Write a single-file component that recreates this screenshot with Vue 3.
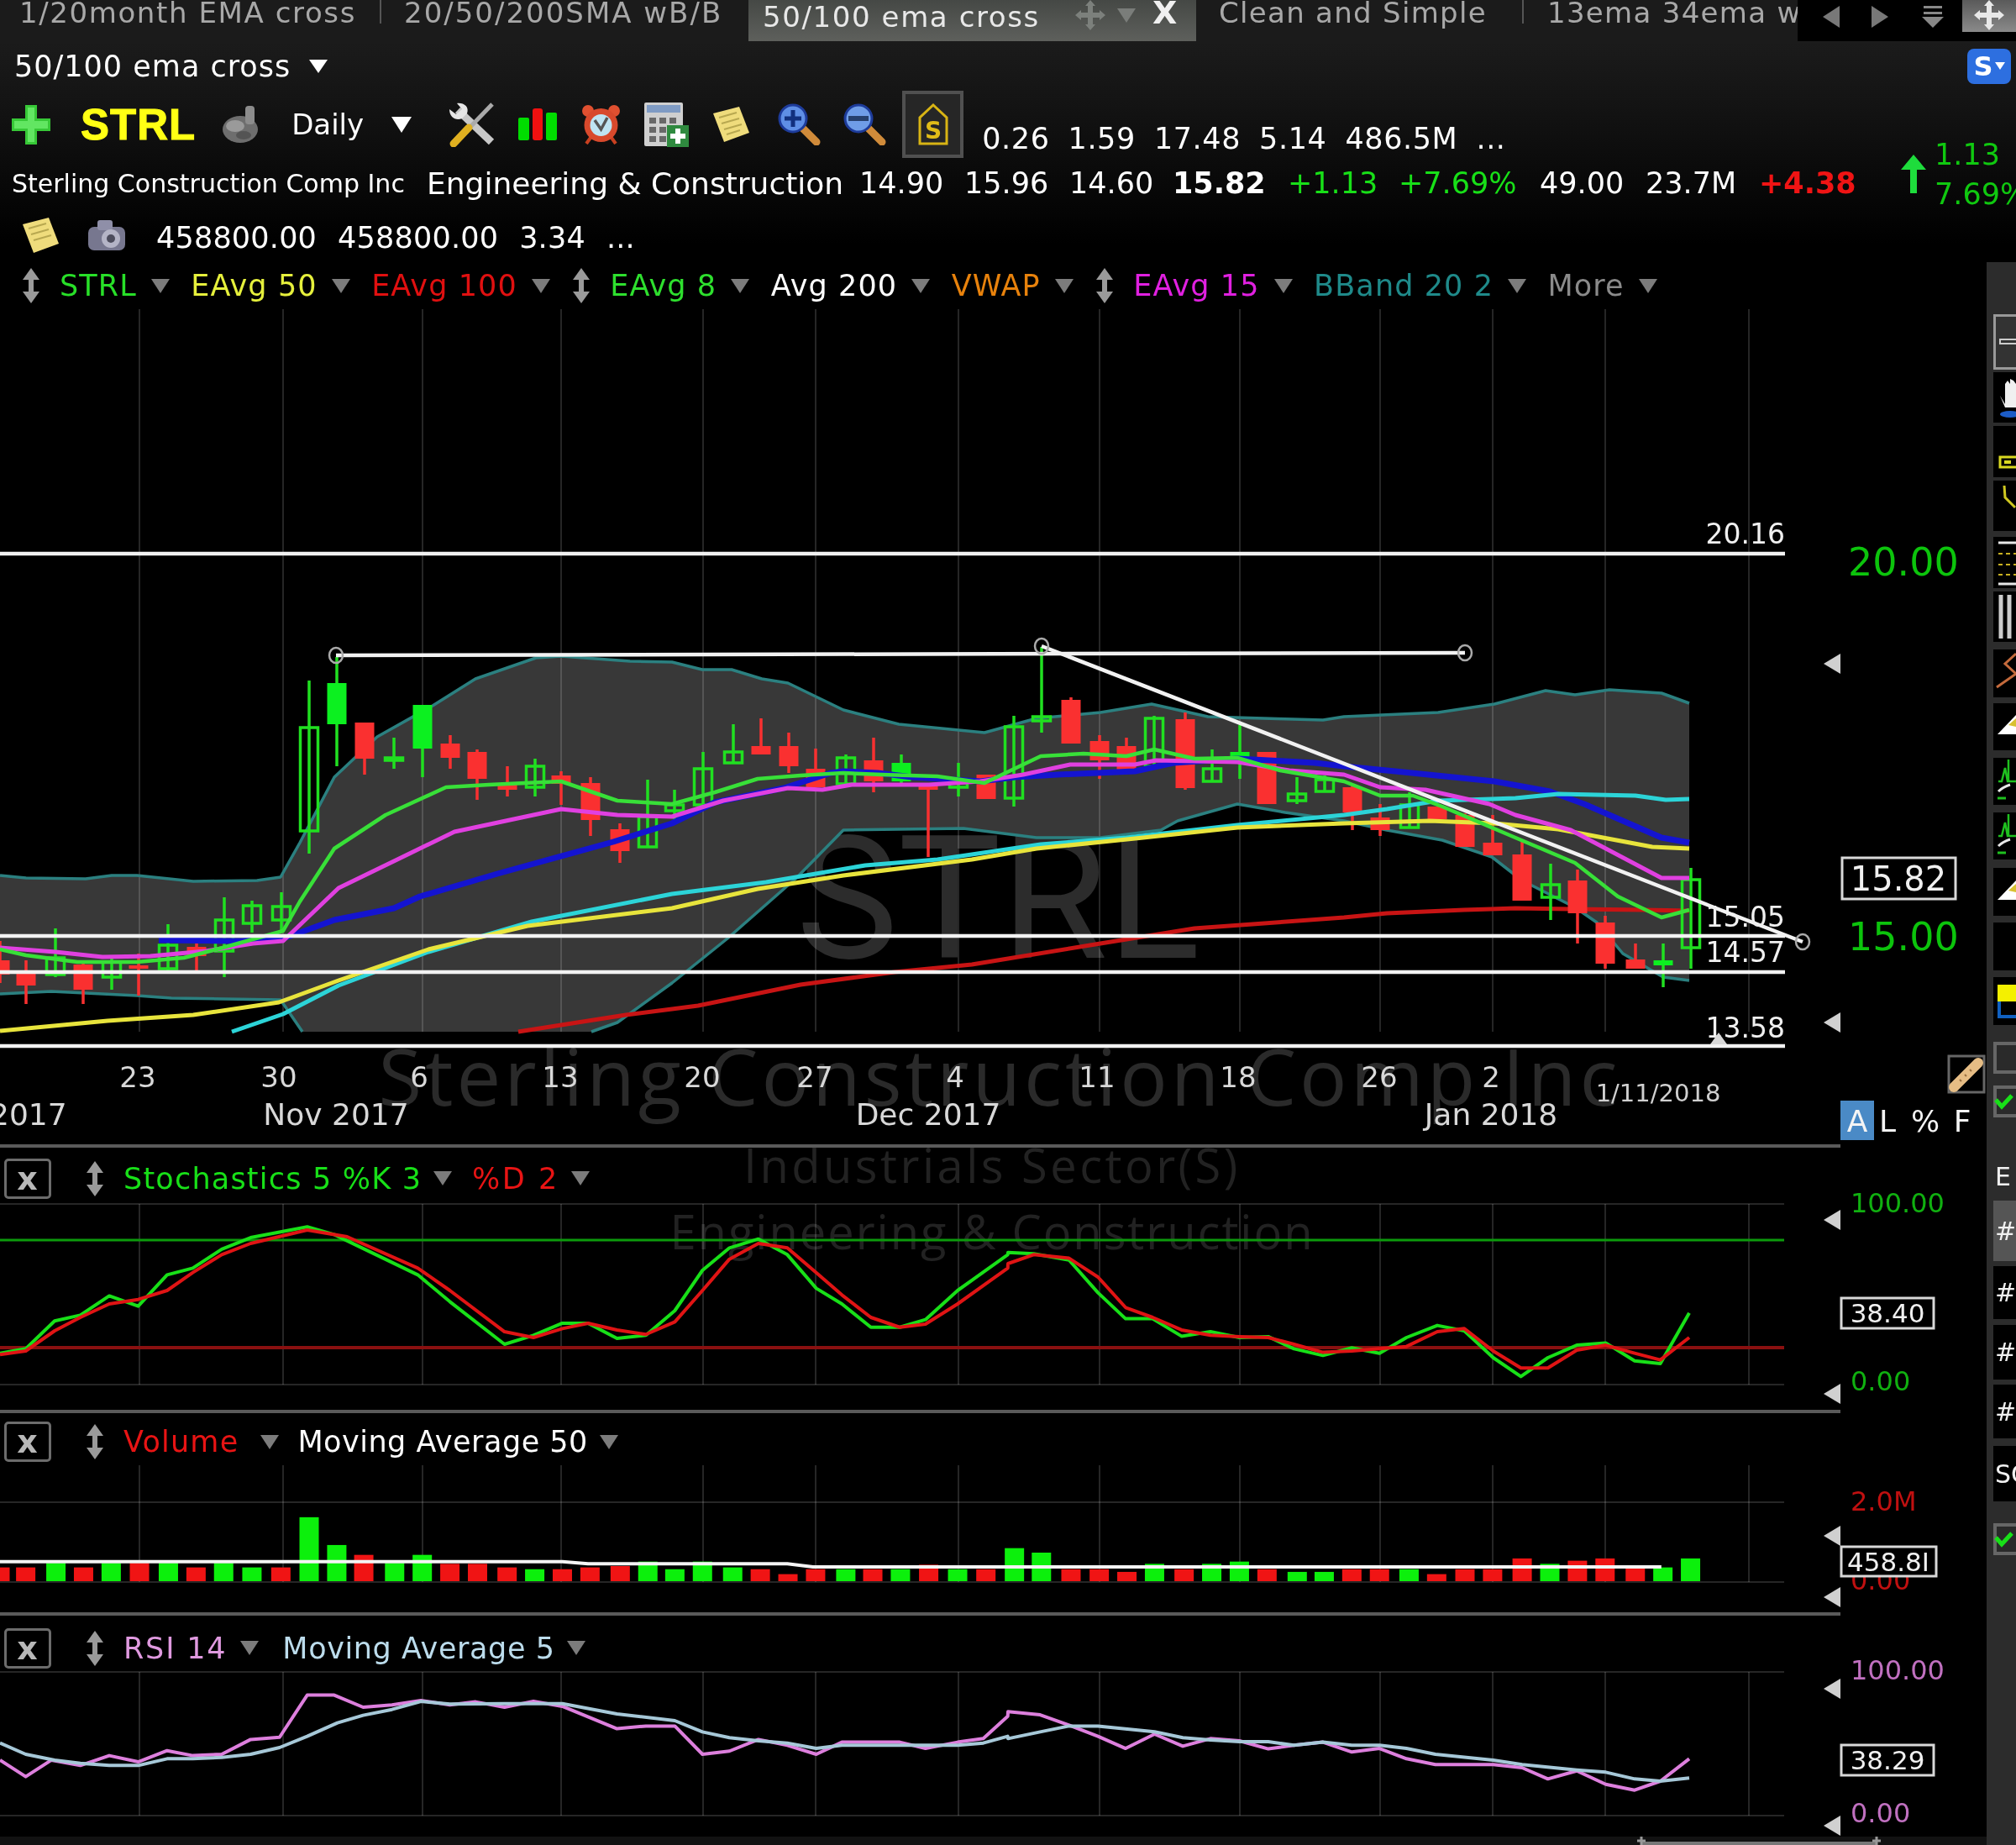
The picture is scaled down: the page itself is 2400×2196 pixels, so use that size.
<template>
  <div class="terminal">
    <div class="watermarks">
      <div class="wm wm-symbol">STRL</div>
      <div class="wm wm-name">Sterling Construction Comp Inc</div>
      <div class="wm wm-sector">Industrials Sector(S)</div>
      <div class="wm wm-industry">Engineering &amp; Construction</div>
    </div>

    <div class="content">
      <header class="head">
        <nav class="tabs">
          <span class="tab t1">1/20month EMA cross</span>
          <i class="tab-sep s1" />
          <span class="tab t2">20/50/200SMA wB/B</span>
          <span class="tab-active">
            <span class="tab-active-label">50/100 ema cross</span>
            <svg class="move" viewBox="0 0 40 36" width="40" height="36">
              <path d="M20 0l6 7h-3v8h8v-3l7 6-7 6v-3h-8v8h3l-6 7-6-7h3v-8H9v3l-7-6 7-6v3h8V7h-3z" fill="#7c807c" />
            </svg>
            <i class="caret caret-dim" />
            <b class="tab-close">X</b>
          </span>
          <span class="tab t3">Clean and Simple</span>
          <i class="tab-sep s2" />
          <span class="tab t4">13ema 34ema w</span>
          <div class="tab-controls">
            <svg viewBox="0 0 20 26" width="20" height="26"><path d="M20 0v26L0 13z" fill="#787878" /></svg>
            <svg class="next" viewBox="0 0 20 26" width="20" height="26"><path d="M0 0v26l20-13z" fill="#787878" /></svg>
            <svg class="stack" viewBox="0 0 26 26" width="26" height="26">
              <rect x="2" y="0" width="22" height="3" fill="#888" /><rect x="2" y="7" width="22" height="3" fill="#888" />
              <path d="M0 13h26L13 26z" fill="#888" />
            </svg>
            <span class="move-box">
              <svg viewBox="0 0 40 36" width="40" height="36">
                <path d="M20 0l6 7h-3v8h8v-3l7 6-7 6v-3h-8v8h3l-6 7-6-7h3v-8H9v3l-7-6 7-6v3h8V7h-3z" fill="#e8e8e8" />
              </svg>
            </span>
          </div>
        </nav>

        <div class="title-row">
          <span class="title">50/100 ema cross</span>
          <i class="caret caret-white" />
          <span class="badge"><b>S</b><i /></span>
        </div>

        <div class="tool-row">
          <svg class="ic-plus" viewBox="0 0 46 47" width="46" height="47">
            <path d="M16 0h14v16h16v15H30v16H16V31H0V16h16z" fill="#37c837" />
            <path d="M19 3h8v16h16v9H27v16h-8V28H3v-9h16z" fill="#62e662" />
          </svg>
          <span class="symbol">STRL</span>
          <svg class="ic-blob" viewBox="0 0 46 45" width="46" height="45">
            <ellipse cx="22" cy="28" rx="21" ry="16" fill="#6e6e6e" />
            <rect x="28" y="0" width="11" height="22" rx="4" fill="#8c8c8c" />
            <ellipse cx="16" cy="24" rx="11" ry="7" fill="#9a9a9a" />
            <ellipse cx="26" cy="35" rx="9" ry="5" fill="#545454" />
          </svg>
          <span class="interval">Daily</span>
          <i class="caret caret-white caret-big" />
          <div class="tools">
            <svg viewBox="0 0 57 53" width="57" height="53">
              <path d="M13 9l40 38" stroke="#c8c8c8" stroke-width="9" />
              <path d="M3 8c0 10 8 14 15 11l6-6C27 5 20 0 12 1l6 7-7 6z" fill="#e6e6e6" />
              <path d="M54 2L26 31" stroke="#aaa" stroke-width="5" />
              <path d="M26 30L8 49" stroke="#e0b020" stroke-width="9" stroke-linecap="round" />
            </svg>
            <svg viewBox="0 0 48 38" width="48" height="38">
              <rect x="1" y="11" width="13" height="27" rx="2" fill="#0d0" />
              <rect x="18" y="0" width="12" height="38" rx="3" fill="#f01010" />
              <rect x="34" y="5" width="13" height="33" rx="2" fill="#0d0" />
            </svg>
            <svg viewBox="0 0 49 48" width="49" height="48">
              <circle cx="9" cy="8" r="7" fill="#e05030" /><circle cx="40" cy="8" r="7" fill="#e05030" />
              <path d="M12 40l-5 7M37 40l5 7" stroke="#c84020" stroke-width="4" />
              <circle cx="24.500" cy="25" r="20" fill="#d8492c" />
              <circle cx="24.500" cy="25" r="13" fill="#bfe4f2" />
              <path d="M17 19l7.500 11L32 16" fill="none" stroke="#555" stroke-width="3.500" />
            </svg>
            <svg viewBox="0 0 53 53" width="53" height="53">
              <rect x="0" y="0" width="46" height="52" rx="2" fill="#cfcfcf" />
              <rect x="3" y="3" width="40" height="9" fill="#7f9bc4" />
              <path d="M6 18h8v7H6zM18 18h8v7h-8zM30 18h8v7h-8zM6 29h8v7H6zM18 29h8v7h-8zM6 40h8v7H6zM18 40h8v7h-8z" fill="#686868" />
              <rect x="27" y="27" width="26" height="26" fill="#2f8a3f" />
              <path d="M37 31h6v6h6v6h-6v6h-6v-6h-6v-6h6z" fill="#fff" />
            </svg>
            <svg class="ic-note" viewBox="0 0 46 44" width="46" height="44">
              <path d="M2 9L33 1l12 31-30 11z" fill="#efdc7c" />
              <path d="M9 14l21-6M12 21l21-6M15 28l21-6M18 34l16-5" stroke="#b8a850" stroke-width="2" />
            </svg>
            <svg viewBox="0 0 51 50" width="51" height="50">
              <path d="M30 30l16 16" stroke="#d08b3a" stroke-width="9" stroke-linecap="round" />
              <circle cx="18" cy="18" r="16" fill="#5f8fe6" stroke="#1d3b9a" stroke-width="3" />
              <path d="M8 18h20M18 8v20" stroke="#12307e" stroke-width="5" />
            </svg>
            <svg viewBox="0 0 51 50" width="51" height="50">
              <path d="M30 30l16 16" stroke="#d08b3a" stroke-width="9" stroke-linecap="round" />
              <circle cx="18" cy="18" r="16" fill="#6f9de8" stroke="#1d3b9a" stroke-width="3" />
              <path d="M6 18h24" stroke="#26406e" stroke-width="6" />
            </svg>
            <span class="shield-box">
              <svg viewBox="0 0 36 50" width="36" height="50">
                <path d="M18 2L34 17v31H2V17z" fill="none" stroke="#d8b414" stroke-width="3" />
                <text class="shield-s" x="18" y="42" text-anchor="middle">S</text>
              </svg>
            </span>
          </div>
          <div class="stats">
            <span>0.26</span><span>1.59</span><span>17.48</span><span>5.14</span><span>486.5M</span><span>...</span>
          </div>
        </div>

        <div class="quote-row">
          <span class="company">Sterling Construction Comp Inc</span>
          <span class="industry">Engineering &amp; Construction</span>
          <span class="q q1">14.90</span>
          <span class="q q2">15.96</span>
          <span class="q q3">14.60</span>
          <b class="q q4">15.82</b>
          <span class="q q5 up">+1.13</span>
          <span class="q q6 up">+7.69%</span>
          <span class="q q7">49.00</span>
          <span class="q q8">23.7M</span>
          <b class="q q9 down">+4.38</b>
          <svg class="up-arrow" viewBox="0 0 30 46" width="30" height="46">
            <path d="M15 0l15 18H19v28h-8V18H0z" fill="#1edc3c" />
          </svg>
          <div class="change"><span>1.13</span><span>7.69%</span></div>
        </div>

        <div class="extra-row">
          <svg viewBox="0 0 46 44" width="46" height="44">
            <path d="M2 9L33 1l12 31-30 11z" fill="#efdc7c" />
            <path d="M9 14l21-6M12 21l21-6M15 28l21-6" stroke="#b8a850" stroke-width="2" />
          </svg>
          <svg class="ic-camera" viewBox="0 0 46 40" width="46" height="40">
            <rect x="1" y="10" width="44" height="28" rx="7" fill="#77778f" />
            <rect x="12" y="2" width="18" height="12" rx="3" fill="#8f8fa8" />
            <circle cx="28" cy="24" r="11" fill="#b4b4c6" /><circle cx="28" cy="24" r="5" fill="#4c4c5c" />
          </svg>
          <div class="extra-values">
            <span>458800.00</span><span>458800.00</span><span>3.34</span><span>...</span>
          </div>
        </div>
      </header>

      <div class="workspace">
        <div class="charts">
          <div class="legend">
            <template v-for="item in legend" :key="item.label">
              <svg v-if="item.updown" class="updown" viewBox="0 0 24 42" width="24" height="42">
                <path d="M12 0l10 14h-7v14h7L12 42 2 28h7V14H2z" fill="#9a9a9a" />
              </svg>
              <span class="legend-label" :style="{ color: item.color }">{{ item.label }}</span>
              <i class="caret caret-grey" />
            </template>
          </div>

          <svg class="plot" viewBox="0 368 2365 994" width="2365" height="994">
            <path :d="bandArea" fill="#383838" />
            <line v-for="x in gridX" :key="x" :x1="x" :x2="x" y1="368" y2="1228" class="grid" />
            <polyline :points="pts(bbUpper)" class="ln" stroke="#2b8080" stroke-width="3.500" />
            <polyline :points="pts(bbLower)" class="ln" stroke="#2b8080" stroke-width="3.500" />
            <polyline :points="pts(bbLowerLeft)" class="ln" stroke="#2b8080" stroke-width="3.500" />
            <polyline :points="pts(emaRed)" class="ln" stroke="#c81414" stroke-width="5" />

            <g v-for="c in candles" :key="c[0]">
              <line :x1="c[0]" :x2="c[0]" :y1="c[1]" :y2="c[2]" stroke-width="3.500" :stroke="c[5] === 'r' ? '#f83030' : '#20e020'" />
              <rect
                v-if="c[5] === 'h'"
                :x="c[0] - 10.500" :y="c[3]" width="21" :height="c[4] - c[3]"
                fill="#000" fill-opacity="0.001" stroke="#20e020" stroke-width="3.500"
              />
              <rect
                v-else
                :x="c[0] - 11.500" :y="c[3]" width="23" :height="c[4] - c[3]"
                :fill="c[5] === 'r' ? '#fa3030' : '#0cf020'"
              />
            </g>

            <polyline :points="pts(emaBlue)" class="ln" stroke="#1414d0" stroke-width="7" />
            <polyline :points="pts(emaCyan)" class="ln" stroke="#2cd4d8" stroke-width="5" />
            <polyline :points="pts(emaYellow)" class="ln" stroke="#e8e43c" stroke-width="5" />
            <polyline :points="pts(emaMagenta)" class="ln" stroke="#e040e0" stroke-width="5" />
            <polyline :points="pts(emaGreen)" class="ln" stroke="#38e038" stroke-width="4.500" />

            <line v-for="y in levels" :key="y" x1="0" x2="2125" :y1="y" :y2="y" class="level" />
            <line x1="400" y1="780" x2="1744" y2="777" class="level" />
            <line x1="1240" y1="769" x2="2146" y2="1121" class="level" />
            <ellipse v-for="h in handles" :key="h[0]" :cx="h[0]" :cy="h[1]" rx="8" ry="9" class="handle" />

            <text v-for="l in levelLabels" :key="l[0]" x="2125" :y="l[1]" class="t-level">{{ l[0] }}</text>
            <polygon points="2046,1229 2036,1243 2056,1243" fill="#d8d8d8" />

            <text x="2200" y="685" class="t-price">20.00</text>
            <text x="2200" y="1131" class="t-price">15.00</text>
            <polygon v-for="y in [790, 1217]" :key="y" :points="tri(y)" fill="#d0d0d0" />
            <rect x="2193" y="1021" width="135" height="49" class="value-box" />
            <text x="2260" y="1060" class="t-value-big">15.82</text>

            <text v-for="d in dates" :key="d[0]" :x="d[1]" y="1294" class="t-date">{{ d[0] }}</text>
            <text x="-12" y="1339" class="t-month t-left">2017</text>
            <text x="400" y="1339" class="t-month">Nov 2017</text>
            <text x="1105" y="1339" class="t-month">Dec 2017</text>
            <text x="1775" y="1339" class="t-month">Jan 2018</text>
            <text x="1974" y="1311" class="t-stamp">1/11/2018</text>

            <rect x="2320" y="1257" width="42" height="43" fill="#000" stroke="#666" stroke-width="3" />
            <path d="M2326 1294l29-29" stroke="#e6bd85" stroke-width="12" stroke-linecap="round" />
            <path d="M2333 1285l2 2M2339 1279l2 2M2345 1273l2 2" stroke="#9a7040" stroke-width="2" />

            <rect x="2191" y="1310" width="40" height="47" fill="#4a8ac6" />
            <text x="2211" y="1347" class="t-scale">A</text>
            <text x="2247" y="1347" class="t-scale">L</text>
            <text x="2292" y="1347" class="t-scale">%</text>
            <text x="2336" y="1347" class="t-scale">F</text>
          </svg>
          <div class="separator" />

          <div class="panel-head stoch-head">
            <span class="close-box">x</span>
            <svg class="updown" viewBox="0 0 24 42" width="24" height="42"><path d="M12 0l10 14h-7v14h7L12 42 2 28h7V14H2z" fill="#9a9a9a" /></svg>
            <span class="green">Stochastics 5 %K 3</span><i class="caret caret-grey" />
            <span class="red pct-d">%D 2</span><i class="caret caret-grey" />
          </div>
          <svg class="plot" viewBox="0 1433 2365 245" width="2365" height="245">
            <line v-for="x in gridX" :key="x" :x1="x" :x2="x" y1="1433" y2="1648" class="grid" />
            <line x1="0" x2="2124" y1="1433" y2="1433" class="grid" />
            <line x1="0" x2="2124" y1="1648" y2="1648" class="grid" />
            <line x1="0" x2="2124" y1="1476" y2="1476" stroke="#0c9a0c" stroke-width="3" />
            <line x1="0" x2="2124" y1="1604" y2="1604" stroke="#8a1010" stroke-width="4" />
            <polyline :points="pts(stochK)" class="ln" stroke="#18e018" stroke-width="4" />
            <polyline :points="pts(stochD)" class="ln" stroke="#e01414" stroke-width="4" />
            <text x="2203" y="1443" class="t-axis" fill="#10b010">100.00</text>
            <text x="2203" y="1655" class="t-axis" fill="#10b010">0.00</text>
            <polygon v-for="y in [1452, 1659]" :key="y" :points="tri(y)" fill="#d0d0d0" />
            <rect x="2192" y="1545" width="110" height="36" class="value-box" />
            <text x="2247" y="1574" class="t-value">38.40</text>
          </svg>
          <div class="separator" />

          <div class="panel-head vol-head">
            <span class="close-box">x</span>
            <svg class="updown" viewBox="0 0 24 42" width="24" height="42"><path d="M12 0l10 14h-7v14h7L12 42 2 28h7V14H2z" fill="#9a9a9a" /></svg>
            <span class="red vol-label">Volume</span><i class="caret caret-grey" />
            <span class="ma-white">Moving Average 50</span><i class="caret caret-grey" />
          </div>
          <svg class="plot" viewBox="0 1744 2365 175" width="2365" height="175">
            <line v-for="x in gridX" :key="x" :x1="x" :x2="x" y1="1744" y2="1883" class="grid" />
            <line x1="0" x2="2124" y1="1788" y2="1788" class="grid" />
            <line x1="0" x2="2124" y1="1883" y2="1883" class="grid" />
            <rect
              v-for="b in volume" :key="b.x"
              :x="b.x - 11.500" :y="b.y" width="23" :height="1882 - b.y"
              :fill="b.up ? '#0cf00c' : '#f01414'"
            />
            <polyline :points="pts(volumeMa)" class="ln" stroke="#f4f4f4" stroke-width="4" />
            <text x="2203" y="1798" class="t-axis" fill="#c01010">2.0M</text>
            <text x="2203" y="1892" class="t-axis" fill="#c01010">0.00</text>
            <polygon v-for="y in [1828, 1901]" :key="y" :points="tri(y)" fill="#d0d0d0" />
            <rect x="2192" y="1841" width="113" height="35" class="value-box" />
            <text x="2248" y="1870" class="t-value">458.8I</text>
          </svg>
          <div class="separator" />

          <div class="panel-head rsi-head">
            <span class="close-box">x</span>
            <svg class="updown" viewBox="0 0 24 42" width="24" height="42"><path d="M12 0l10 14h-7v14h7L12 42 2 28h7V14H2z" fill="#9a9a9a" /></svg>
            <span class="pink">RSI 14</span><i class="caret caret-grey" />
            <span class="ma-blue">Moving Average 5</span><i class="caret caret-grey" />
          </div>
          <svg class="plot" viewBox="0 1990 2365 206" width="2365" height="206">
            <line v-for="x in gridX" :key="x" :x1="x" :x2="x" y1="1990" y2="2161" class="grid" />
            <line x1="0" x2="2124" y1="1990" y2="1990" class="grid" />
            <line x1="0" x2="2124" y1="2161" y2="2161" class="grid" />
            <polyline :points="pts(rsi)" class="ln" stroke="#dd7fdd" stroke-width="4" />
            <polyline :points="pts(rsiMa)" class="ln" stroke="#a6c8d8" stroke-width="4" />
            <text x="2203" y="1999" class="t-axis" fill="#c070c0">100.00</text>
            <text x="2203" y="2169" class="t-axis" fill="#c070c0">0.00</text>
            <polygon v-for="y in [2010, 2173]" :key="y" :points="tri(y)" fill="#d0d0d0" />
            <rect x="2192" y="2077" width="110" height="36" class="value-box" />
            <text x="2247" y="2106" class="t-value">38.29</text>
            <rect x="0" y="2186" width="2365" height="10" fill="#121212" />
            <rect x="1954" y="2192" width="280" height="4" fill="#777" />
            <path d="M1954 2186v10M1949 2191h10M2234 2186v10M2229 2191h10" stroke="#999" stroke-width="3" />
          </svg>
        </div>

        <aside class="sidebar">
          <div
            v-for="(cell, i) in cells"
            :key="i"
            class="cell"
            :class="cell.kind"
            :style="{ height: cell.h + 'px', marginTop: cell.gap + 'px' }"
          >
            <span v-if="cell.text">{{ cell.text }}</span>
            <svg v-else-if="cell.icon" viewBox="0 0 27 60" width="27" height="60" v-html="cell.icon" />
          </div>
        </aside>
      </div>
    </div>
  </div>
</template>

<script setup>
const pts = (a) => a.map((p) => p.join(',')).join(' ')
const tri = (y) => `2171,${y} 2191,${y - 12} 2191,${y + 12}`

// lower panels were read off at 1.307 / 1.875 px, so scale back to page px
const page = (a, x0 = 0) => a.map(([x, y]) => [x0 + x / 1.307, 1360 + y / 1.875])

const legend = [
  { label: 'STRL', color: '#28e028', updown: true },
  { label: 'EAvg 50', color: '#e6f03c' },
  { label: 'EAvg 100', color: '#e01010' },
  { label: 'EAvg 8', color: '#2ee02e', updown: true },
  { label: 'Avg 200', color: '#ffffff' },
  { label: 'VWAP', color: '#e8820c' },
  { label: 'EAvg 15', color: '#e020e0', updown: true },
  { label: 'BBand 20 2', color: '#1f8a8a' },
  { label: 'More', color: '#8a8a8a' }
]

const gridX = [166, 337, 503, 668, 837, 971, 1141, 1309, 1476, 1643, 1777, 1911, 2082]
const levels = [659, 1114, 1157, 1245]
const handles = [[400, 780], [1240, 769], [1744, 777], [2146, 1121]]
const levelLabels = [['20.16', 647], ['15.05', 1103], ['14.57', 1145], ['13.58', 1235]]
const dates = [
  ['23', 164], ['30', 332], ['6', 499], ['13', 667], ['20', 836], ['27', 970],
  ['4', 1137], ['11', 1306], ['18', 1474], ['26', 1642], ['2', 1775]
]

const bbUpper = [
  [0, 1042], [31, 1045], [102, 1046], [133, 1042], [163, 1042], [230, 1049], [306, 1048], [334, 1044],
  [357, 1003], [398, 925], [449, 877], [515, 840], [566, 808], [638, 783], [668, 781], [750, 787],
  [800, 788], [836, 797], [871, 797], [907, 808], [938, 813], [1004, 845], [1070, 862], [1172, 872],
  [1234, 855], [1310, 848], [1371, 838], [1438, 853], [1575, 857], [1600, 853], [1712, 848], [1779, 838],
  [1840, 822], [1875, 827], [1916, 821], [1978, 825], [2011, 837]
]
const bbLower = [
  [2011, 1167], [1980, 1163], [1932, 1135], [1901, 1098], [1875, 1080], [1812, 1048], [1776, 1020],
  [1717, 1000], [1651, 988], [1600, 977], [1530, 967], [1473, 957], [1402, 977], [1382, 988], [1310, 997],
  [1234, 997], [1147, 986], [1070, 987], [1004, 988], [948, 1045], [866, 1117], [800, 1170], [735, 1217],
  [704, 1228]
]
// band runs off the bottom of the plot between these two
const bbLowerLeft = [[360, 1228], [334, 1190], [204, 1188], [163, 1185], [61, 1180], [0, 1183]]
const bandArea = 'M' + [...bbUpper, ...bbLower, ...bbLowerLeft].map((p) => p.join(' ')).join('L') + 'Z'

// [x, wick top, wick bottom, body top, body bottom, h=hollow g=green r=red]
const candles = [
  [0, 1120, 1170, 1143, 1160, 'r'], [31, 1143, 1195, 1158, 1173, 'r'], [66, 1105, 1163, 1140, 1160, 'h'],
  [99, 1147, 1195, 1148, 1178, 'r'], [133, 1138, 1178, 1145, 1163, 'h'], [165, 1135, 1185, 1149, 1153, 'r'],
  [200, 1100, 1155, 1125, 1153, 'h'], [234, 1123, 1158, 1127, 1138, 'r'], [267, 1068, 1163, 1095, 1132, 'h'],
  [300, 1072, 1110, 1078, 1099, 'h'], [335, 1062, 1108, 1079, 1095, 'h'], [368, 810, 1016, 866, 989, 'h'],
  [401, 782, 912, 813, 862, 'g'], [434, 860, 922, 860, 903, 'r'], [469, 878, 915, 902, 905, 'h'],
  [503, 839, 925, 839, 891, 'g'], [536, 875, 915, 885, 902, 'r'], [568, 892, 952, 895, 927, 'r'],
  [604, 912, 948, 932, 940, 'r'], [637, 903, 948, 912, 937, 'h'], [668, 918, 958, 923, 933, 'r'],
  [703, 925, 995, 932, 976, 'r'], [738, 980, 1027, 987, 1013, 'r'], [771, 928, 1008, 972, 1008, 'h'],
  [803, 940, 975, 958, 965, 'h'], [837, 895, 958, 915, 958, 'h'], [873, 862, 907, 895, 908, 'h'],
  [906, 855, 897, 888, 898, 'r'], [939, 872, 920, 888, 912, 'r'], [971, 891, 937, 915, 937, 'r'],
  [1007, 898, 935, 902, 933, 'h'], [1040, 878, 943, 905, 930, 'r'], [1073, 898, 933, 908, 930, 'g'],
  [1105, 932, 1020, 932, 940, 'r'], [1141, 908, 948, 932, 937, 'h'], [1174, 922, 951, 922, 951, 'r'],
  [1207, 852, 960, 865, 950, 'h'], [1240, 770, 872, 853, 858, 'h'], [1275, 830, 885, 833, 885, 'r'],
  [1309, 875, 927, 882, 905, 'r'], [1341, 878, 916, 888, 916, 'r'], [1374, 852, 913, 855, 912, 'h'],
  [1411, 848, 940, 856, 938, 'r'], [1443, 892, 930, 915, 930, 'h'], [1476, 863, 927, 895, 903, 'g'],
  [1508, 895, 957, 895, 957, 'r'], [1544, 925, 957, 945, 953, 'h'], [1577, 923, 942, 928, 942, 'h'],
  [1610, 935, 988, 937, 967, 'r'], [1643, 957, 995, 973, 988, 'r'], [1678, 943, 985, 958, 985, 'h'],
  [1711, 960, 975, 960, 975, 'r'], [1744, 968, 1008, 970, 1008, 'r'], [1777, 970, 1018, 1003, 1018, 'r'],
  [1812, 1000, 1072, 1017, 1072, 'r'], [1846, 1028, 1095, 1053, 1068, 'h'], [1878, 1035, 1123, 1048, 1087, 'r'],
  [1911, 1090, 1153, 1098, 1147, 'r'], [1947, 1123, 1153, 1142, 1153, 'r'], [1980, 1123, 1175, 1143, 1149, 'g'],
  [2013, 1033, 1153, 1047, 1128, 'h']
]

const emaGreen = [
  [0, 1130], [31, 1137], [92, 1145], [163, 1145], [219, 1140], [265, 1128], [337, 1108], [357, 1073],
  [398, 1010], [459, 970], [531, 937], [582, 934], [668, 930], [735, 953], [800, 957], [851, 943],
  [902, 927], [953, 923], [1004, 920], [1050, 922], [1116, 924], [1172, 932], [1239, 900], [1290, 897],
  [1341, 900], [1374, 892], [1422, 903], [1473, 902], [1524, 917], [1600, 930], [1643, 947], [1682, 947],
  [1717, 960], [1804, 997], [1875, 1027], [1926, 1067], [1978, 1092], [2011, 1083]
]
const emaMagenta = [
  [0, 1128], [66, 1133], [122, 1139], [179, 1138], [245, 1132], [301, 1123], [337, 1120], [403, 1057],
  [541, 990], [668, 963], [735, 970], [800, 972], [861, 953], [938, 938], [979, 940], [1014, 934],
  [1106, 934], [1167, 930], [1218, 922], [1274, 910], [1351, 910], [1376, 905], [1473, 907], [1535, 917],
  [1600, 922], [1643, 937], [1697, 940], [1773, 957], [1804, 970], [1870, 988], [1978, 1045], [2011, 1045]
]
const emaBlue = [
  [189, 1119], [286, 1120], [337, 1117], [357, 1110], [398, 1095], [469, 1081], [500, 1067], [592, 1040],
  [730, 1002], [800, 980], [851, 955], [933, 938], [989, 920], [1004, 918], [1045, 920], [1086, 925],
  [1167, 930], [1208, 925], [1259, 922], [1351, 918], [1397, 908], [1473, 903], [1565, 908], [1600, 912],
  [1661, 918], [1779, 930], [1845, 942], [1886, 957], [1978, 997], [2011, 1003]
]
const emaCyan = [
  [276, 1228], [337, 1207], [403, 1173], [510, 1133], [633, 1097], [800, 1064], [912, 1050], [1030, 1030],
  [1116, 1023], [1239, 1005], [1341, 997], [1473, 982], [1600, 970], [1651, 963], [1712, 953], [1804, 950],
  [1855, 945], [1947, 947], [1983, 952], [2011, 951]
]
const emaYellow = [
  [0, 1227], [128, 1215], [230, 1208], [332, 1193], [403, 1167], [510, 1130], [628, 1102], [800, 1081],
  [902, 1058], [1004, 1042], [1157, 1023], [1234, 1010], [1361, 997], [1473, 985], [1600, 980], [1702, 977],
  [1779, 980], [1855, 987], [1967, 1008], [2011, 1010]
]
const emaRed = [
  [617, 1228], [745, 1208], [800, 1201], [831, 1197], [953, 1172], [1065, 1157], [1157, 1148], [1310, 1123],
  [1422, 1105], [1600, 1092], [1651, 1087], [1743, 1083], [1804, 1081], [1870, 1082], [1957, 1083], [2011, 1084]
]

const stochK = [
  ...page([
    [0, 470], [40, 460], [85, 398], [125, 385], [170, 342], [215, 365], [260, 295], [300, 280], [345, 238],
    [390, 212], [478, 188], [520, 205], [650, 295], [700, 355], [785, 450], [830, 430], [875, 403], [915, 403],
    [960, 437], [1005, 430], [1050, 375], [1093, 285], [1135, 235], [1180, 215], [1225, 250], [1270, 325],
    [1310, 360], [1355, 412], [1400, 412], [1440, 395], [1490, 330], [1568, 250]
  ]),
  ...page([
    [0, 245], [40, 248], [95, 262], [140, 335], [183, 393], [225, 393], [270, 432], [315, 422], [360, 435],
    [405, 433], [445, 460], [490, 475], [535, 458], [578, 470], [620, 435], [668, 408], [710, 420], [755, 480],
    [798, 522], [840, 480], [885, 452], [930, 447], [975, 487], [1015, 493], [1060, 380]
  ], 1200)
]
const stochD = [
  ...page([
    [0, 473], [40, 465], [85, 420], [125, 390], [170, 360], [215, 350], [260, 330], [300, 290], [345, 250],
    [390, 225], [478, 195], [540, 210], [650, 280], [700, 330], [785, 422], [830, 435], [875, 415], [915, 403],
    [960, 418], [1005, 428], [1050, 400], [1093, 330], [1135, 260], [1180, 225], [1225, 235], [1270, 290],
    [1310, 340], [1355, 390], [1400, 412], [1440, 405], [1490, 360], [1568, 280]
  ]),
  ...page([
    [0, 270], [40, 250], [95, 258], [140, 300], [183, 368], [225, 390], [270, 418], [315, 430], [360, 433],
    [405, 435], [445, 450], [490, 468], [535, 465], [578, 460], [620, 455], [668, 422], [710, 415], [755, 465],
    [798, 503], [840, 503], [885, 463], [930, 452], [975, 470], [1015, 485], [1060, 435]
  ], 1200)
]

const rsi = [
  ...page([
    [0, 1378], [40, 1415], [80, 1378], [125, 1390], [170, 1368], [215, 1382], [260, 1357], [300, 1368], [345, 1365],
    [390, 1332], [435, 1327], [478, 1233], [520, 1233], [565, 1260], [610, 1255], [655, 1245], [700, 1255],
    [740, 1248], [785, 1260], [830, 1247], [875, 1258], [960, 1308], [1005, 1302], [1050, 1302], [1093, 1365],
    [1135, 1358], [1180, 1332], [1225, 1345], [1270, 1365], [1310, 1338], [1400, 1338], [1440, 1352], [1490, 1338],
    [1530, 1330], [1568, 1280]
  ]),
  ...page([
    [0, 1270], [50, 1277], [95, 1300], [140, 1325], [183, 1352], [228, 1320], [272, 1347], [315, 1330], [360, 1335],
    [405, 1353], [445, 1345], [490, 1338], [535, 1360], [578, 1352], [620, 1375], [665, 1388], [755, 1388],
    [800, 1395], [840, 1420], [885, 1402], [930, 1432], [975, 1445], [1015, 1425], [1060, 1375]
  ], 1200)
]
const rsiMa = [
  ...page([
    [0, 1340], [40, 1365], [85, 1378], [125, 1385], [170, 1390], [215, 1390], [260, 1375], [300, 1375], [345, 1372],
    [390, 1365], [435, 1350], [478, 1325], [525, 1295], [565, 1278], [610, 1265], [655, 1247], [700, 1253],
    [785, 1252], [875, 1252], [960, 1275], [1050, 1290], [1093, 1315], [1135, 1328], [1180, 1335], [1225, 1340],
    [1270, 1352], [1310, 1345], [1400, 1345], [1490, 1345], [1530, 1340], [1568, 1325]
  ]),
  ...page([
    [0, 1330], [50, 1315], [95, 1302], [140, 1302], [228, 1315], [272, 1328], [315, 1333], [360, 1337], [405, 1337],
    [445, 1345], [490, 1338], [535, 1345], [578, 1345], [620, 1352], [665, 1365], [755, 1378], [800, 1388],
    [885, 1400], [930, 1405], [975, 1420], [1015, 1425], [1060, 1418]
  ], 1200)
]

const volumeLeft = [
  [0, 948, 0], [40, 948, 0], [87, 938, 1], [130, 948, 0], [173, 938, 1], [217, 938, 0], [262, 938, 1], [305, 948, 0],
  [348, 938, 1], [392, 948, 1], [437, 948, 0], [481, 836, 1], [524, 898, 1], [566, 920, 0], [614, 938, 1], [657, 920, 1],
  [700, 940, 0], [743, 940, 0], [789, 948, 0], [832, 952, 1], [875, 952, 0], [918, 948, 0], [965, 945, 0], [1008, 935, 1],
  [1050, 952, 1], [1093, 935, 1], [1140, 948, 1], [1183, 952, 0], [1226, 963, 0], [1269, 952, 0], [1316, 952, 1],
  [1358, 952, 0], [1401, 952, 1], [1445, 942, 0], [1490, 952, 1], [1534, 952, 0]
]
const volumeRight = [
  [10, 905, 1], [52, 915, 1], [98, 952, 0], [142, 952, 0], [185, 958, 0], [228, 940, 1], [274, 952, 0], [317, 940, 1],
  [360, 935, 1], [403, 952, 0], [450, 958, 1], [492, 958, 1], [535, 952, 0], [578, 952, 0], [624, 952, 1], [667, 963, 0],
  [711, 952, 0], [754, 952, 0], [800, 928, 0], [843, 940, 1], [886, 933, 0], [929, 928, 0], [976, 950, 0], [1019, 948, 1],
  [1062, 928, 1]
]
const toBar = (x0) => ([x, y, up]) => ({ x: x0 + x / 1.307, y: 1360 + y / 1.875, up })
const volume = [...volumeLeft.map(toBar(0)), ...volumeRight.map(toBar(1200))]
const volumeMa = page([[0, 935], [875, 935], [915, 940], [1225, 940], [1265, 947], [2585, 947]])

const greenStep = '<path d="M6 30h4l4-16 3 16h10M18 4v26" fill="none" stroke="#1fc01f" stroke-width="2.500"/><path d="M6 42c4-4 8-6 14-8" stroke="#e8e8e8" stroke-width="3" fill="none"/><path d="M5 50h10" stroke="#1fc01f" stroke-width="3"/>'
const mountain = '<path d="M5 39L27 16v23z" fill="#fff"/><path d="M18 28l9-8v10z" fill="#d8c030"/>'

const cells = [
  { h: 66, gap: 62, kind: 'selected', icon: '<rect x="8" y="27" width="22" height="5" fill="none" stroke="#ccc" stroke-width="2"/>' },
  { h: 60, gap: 3, icon: '<path d="M8 28l6 10V14l3-4 3 4V8l4 2 3 4v28H14z" fill="#f0f0f0"/><ellipse cx="20" cy="50" rx="12" ry="4" fill="#1c5cc8"/>' },
  { h: 61, gap: 4, icon: '<rect x="8" y="36" width="24" height="12" fill="none" stroke="#d8d820" stroke-width="3"/><rect x="13" y="40" width="8" height="4" fill="#d8d820"/>' },
  { h: 60, gap: 4, icon: '<path d="M13 6l1 14 12 12" fill="none" stroke="#d0c820" stroke-width="3"/>' },
  { h: 61, gap: 7, icon: '<path d="M6 6h21M6 55h21" stroke="#e8e8e8" stroke-width="3"/><path d="M6 19h21M6 32h21M6 44h21" stroke="#c8b020" stroke-width="2" stroke-dasharray="5 4"/>' },
  { h: 60, gap: 4, icon: '<path d="M9 4v52M19 4v52" stroke="#ccc" stroke-width="5"/>' },
  { h: 57, gap: 9, icon: '<path d="M27 6L14 18l13 12M4 46l23-16" fill="none" stroke="#c46a3c" stroke-width="3"/>' },
  { h: 56, gap: 7, icon: mountain },
  { h: 56, gap: 9, icon: greenStep },
  { h: 56, gap: 9, icon: greenStep },
  { h: 57, gap: 10, icon: mountain },
  { h: 57, gap: 8 },
  { h: 57, gap: 8, icon: '<rect x="5" y="10" width="22" height="20" fill="#f4f000"/><path d="M7 30v18h20" fill="none" stroke="#1060c0" stroke-width="4"/>' },
  { h: 38, gap: 20, kind: 'outlined' },
  { h: 38, gap: 14, kind: 'outlined', icon: '<path d="M3 28l7 8 12-13" fill="none" stroke="#18e018" stroke-width="5"/>' },
  { h: 50, gap: 45, kind: 'plain', text: 'E' },
  { h: 72, gap: 4, kind: 'selected-fill', text: '#' },
  { h: 63, gap: 6, text: '#' },
  { h: 65, gap: 7, text: '#' },
  { h: 64, gap: 6, text: '#' },
  { h: 66, gap: 9, text: 'SC' },
  { h: 38, gap: 26, kind: 'outlined', icon: '<path d="M3 28l7 8 12-13" fill="none" stroke="#18e018" stroke-width="5"/>' }
]
</script>

<style scoped>
.terminal {
  position: relative;
  width: 2400px;
  height: 2196px;
  background: #000;
  color: #fff;
  overflow: hidden;
  font-family: "DejaVu Sans", "Liberation Sans", sans-serif;
  font-size: 35px;
  filter: blur(0.7px);
}
.watermarks {
  position: absolute;
  inset: 0;
  color: #2a2a2a;
  font-family: "Open Sans", "DejaVu Sans", sans-serif;
}
.wm {
  position: absolute;
  line-height: 1;
  white-space: nowrap;
  transform: translateX(-50%);
}
.wm-symbol {
  left: 1188px;
  top: 968px;
  font-family: Roboto, sans-serif;
  font-size: 205px;
  color: #2c2c2c;
}
.wm-name {
  left: 1190px;
  top: 1233px;
  font-size: 94px;
  letter-spacing: 4px;
}
.wm-sector {
  left: 1181px;
  top: 1358px;
  font-size: 56px;
  letter-spacing: 3.500px;
  color: #222;
}
.wm-industry {
  left: 1181px;
  top: 1437px;
  font-size: 56px;
  letter-spacing: 2px;
  color: #222;
}
.content {
  position: relative;
}
.head {
  height: 312px;
  background: linear-gradient(#1b1b1b 50px, #141414 120px, #000 290px);
}
.tabs {
  display: flex;
  height: 49px;
  white-space: nowrap;
  color: #a8a8a8;
  font-size: 34px;
  overflow: hidden;
}
.tab {
  line-height: 30px;
  letter-spacing: 1.300px;
}
.t1 { margin-left: 23px; width: 399px; letter-spacing: 1.600px; }
.t2 { margin-left: 27px; width: 380px; letter-spacing: 2px; }
.t3 { margin-left: 27px; width: 316px; }
.t4 { margin-left: 28px; width: 298px; overflow: hidden; }
.tab-sep {
  width: 2px;
  height: 28px;
  background: #555;
}
.s1 { margin-left: 30px; }
.s2 { margin-left: 45px; }
.tab-active {
  display: flex;
  align-items: flex-start;
  width: 533px;
  margin-left: 30px;
  padding-left: 17px;
  box-sizing: border-box;
  background: linear-gradient(#454845, #5e605c);
  color: #e8e8e8;
}
.tab-active-label {
  width: 327px;
  letter-spacing: 1.600px;
  line-height: 40px;
}
.move {
  margin-left: 43px;
  margin-top: 0;
}
.tab-active .caret {
  margin: 10px 0 0 12px;
}
.tab-close {
  margin-left: 20px;
  color: #f0f0f0;
  line-height: 30px;
  font-size: 38px;
}
.tab-controls {
  display: flex;
  align-items: flex-start;
  flex: 1;
  height: 49px;
  padding: 7px 0 0 30px;
  box-sizing: border-box;
  background: #000;
}
.next { margin-left: 38px; }
.stack { margin-left: 40px; }
.move-box {
  display: flex;
  justify-content: center;
  width: 64px;
  height: 38px;
  margin: -7px 0 0 auto;
  background: linear-gradient(#5a5a5a, #8a8a8a);
}
.caret {
  display: inline-block;
  width: 0;
  height: 0;
  flex: none;
  border-left: 11px solid transparent;
  border-right: 11px solid transparent;
  border-top: 17px solid #7c7c7c;
}
.caret-dim { border-top-color: #7a7d7a; }
.caret-white {
  border-left-width: 11px;
  border-right-width: 11px;
  border-top: 16px solid #fff;
}
.caret-big {
  border-left-width: 12px;
  border-right-width: 12px;
  border-top-width: 19px;
}
.title-row {
  display: flex;
  align-items: center;
  height: 59px;
  padding-left: 17px;
}
.title {
  letter-spacing: 1px;
}
.title-row .caret {
  margin-left: 22px;
}
.badge {
  display: flex;
  align-items: center;
  justify-content: center;
  gap: 2px;
  width: 52px;
  height: 42px;
  margin-left: auto;
  margin-right: 6px;
  background: #2d6fe0;
  border-radius: 8px;
}
.badge b {
  font-size: 32px;
}
.badge i {
  width: 0;
  height: 0;
  border-left: 6px solid transparent;
  border-right: 6px solid transparent;
  border-top: 9px solid #fff;
}
.tool-row {
  display: flex;
  align-items: center;
  height: 80px;
  padding-left: 14px;
}
.symbol {
  margin-left: 36px;
  color: #ffff14;
  font-family: "Liberation Sans", sans-serif;
  font-weight: 700;
  font-size: 51px;
  letter-spacing: 1px;
  -webkit-text-stroke: 1px #ffff14;
}
.ic-blob { margin-left: 31px; }
.interval {
  margin-left: 37px;
  font-size: 34px;
}
.tool-row > .caret { margin-left: 33px; }
.tools {
  display: flex;
  align-items: center;
  gap: 27px;
  margin-left: 42px;
}
.ic-note { margin-right: 6px; }
.shield-box {
  display: flex;
  align-items: center;
  justify-content: center;
  width: 73px;
  height: 80px;
  margin-left: -8px;
  box-sizing: border-box;
  background: #262626;
  border: 4px solid #505050;
}
.shield-s {
  fill: #e0bc18;
  font-size: 28px;
  font-weight: 700;
}
.stats {
  display: flex;
  gap: 22px;
  margin: 34px 0 0 22px;
  letter-spacing: 0.600px;
}
.quote-row {
  display: flex;
  align-items: center;
  height: 60px;
  white-space: nowrap;
}
.company {
  flex: none;
  width: 508px;
  padding-left: 14px;
  box-sizing: border-box;
  font-size: 30px;
}
.industry {
  flex: none;
  width: 515px;
  font-size: 36px;
}
.q { flex: none; }
.q1 { width: 125px; }
.q2 { width: 125px; }
.q3 { width: 123px; }
.q4 { width: 137px; }
.q5 { width: 132px; }
.q6 { width: 168px; }
.q7 { width: 126px; }
.q8 { width: 135px; }
.q9 { width: 169px; }
.up { color: #18e018; }
.down { color: #f01414; }
.up-arrow {
  flex: none;
  margin-top: -22px;
}
.change {
  display: flex;
  flex: none;
  flex-direction: column;
  margin: -21px 0 0 10px;
  color: #10c810;
  line-height: 47px;
}
.extra-row {
  display: flex;
  align-items: center;
  height: 64px;
  padding-left: 25px;
}
.ic-camera { margin-left: 33px; }
.extra-values {
  display: flex;
  gap: 25px;
  margin: 5px 0 0 36px;
  letter-spacing: 0.200px;
}
.workspace {
  display: flex;
}
.charts {
  width: 2365px;
  flex: none;
}
.legend {
  display: flex;
  align-items: center;
  height: 56px;
  padding-left: 25px;
  white-space: nowrap;
  letter-spacing: 1.100px;
}
.legend-label {
  margin-right: 17px;
}
.legend .caret {
  margin-right: 25.500px;
}
.legend .updown {
  margin-right: 22px;
}
.plot {
  display: block;
  overflow: visible;
}
.separator {
  width: 2191px;
  height: 4px;
  background: #5a5a5a;
}
.panel-head {
  display: flex;
  align-items: center;
  padding-left: 5px;
  box-sizing: border-box;
  white-space: nowrap;
  letter-spacing: 1.200px;
}
.stoch-head { height: 67px; padding-top: 6px; }
.vol-head { height: 62px; padding-top: 6px; }
.rsi-head { height: 67px; padding-top: 10px; }
.close-box {
  display: flex;
  align-items: center;
  justify-content: center;
  width: 56px;
  height: 48px;
  box-sizing: border-box;
  border: 3px solid #6c6c6c;
  border-radius: 5px;
  color: #b8b8b8;
  font-weight: 700;
  font-size: 38px;
  line-height: 1;
}
.panel-head .updown {
  margin: 0 22px 0 40px;
}
.panel-head .caret {
  margin: 0 22px 0 14px;
}
.green { color: #18e018; }
.red { color: #e81414; }
.pink { color: #e09ae0; letter-spacing: 1.800px; margin-right: 2px; }
.pct-d { letter-spacing: 2.500px; margin-left: 2px; }
.ma-white { color: #fff; letter-spacing: 0.500px; }
.ma-blue { color: #bcdcec; letter-spacing: 0.600px; margin-left: 6px; }
.vol-label { margin-right: 12px; }
.grid {
  stroke: rgba(255, 255, 255, 0.15);
  stroke-width: 2;
}
.ln {
  fill: none;
  stroke-linejoin: round;
}
.level {
  stroke: #f2f2f2;
  stroke-width: 4.500;
}
.handle {
  fill: none;
  stroke: #aaa;
  stroke-width: 2.500;
}
.plot text {
  font-family: "DejaVu Sans", sans-serif;
}
.t-level {
  fill: #f0f0f0;
  font-size: 33px;
  text-anchor: end;
}
.t-price {
  fill: #0cc40c;
  font-size: 46px;
}
.value-box {
  fill: #000;
  stroke: #d8d8d8;
  stroke-width: 3;
}
.t-value-big {
  fill: #f0f0f0;
  font-size: 40px;
  text-anchor: middle;
}
.t-value {
  fill: #f0f0f0;
  font-size: 31px;
  text-anchor: middle;
}
.t-axis {
  font-size: 32px;
}
.t-date {
  fill: #d8d8d8;
  font-size: 34px;
  text-anchor: middle;
}
.t-month {
  fill: #d8d8d8;
  font-size: 36px;
  text-anchor: middle;
}
.t-left {
  text-anchor: start;
}
.t-stamp {
  fill: #d0d0d0;
  font-size: 29px;
  text-anchor: middle;
}
.t-scale {
  fill: #f4f4f4;
  font-size: 36px;
  text-anchor: middle;
}
.sidebar {
  display: flex;
  flex-direction: column;
  flex: 1;
  height: 1884px;
  background: #2c2c2c;
}
.cell {
  display: flex;
  align-items: center;
  flex: none;
  margin-left: 8px;
  background: #000;
  overflow: hidden;
  font-size: 30px;
}
.cell span {
  padding-left: 2px;
  color: #f0f0f0;
}
.selected {
  background: #333;
  box-shadow: inset 3px 3px 0 #999, inset 0 -3px 0 #999;
}
.selected-fill {
  background: #555;
}
.outlined {
  background: #2a2a2a;
  box-shadow: inset 4px 4px 0 #666, inset 0 -4px 0 #666;
}
.plain {
  background: #2c2c2c;
}
</style>
